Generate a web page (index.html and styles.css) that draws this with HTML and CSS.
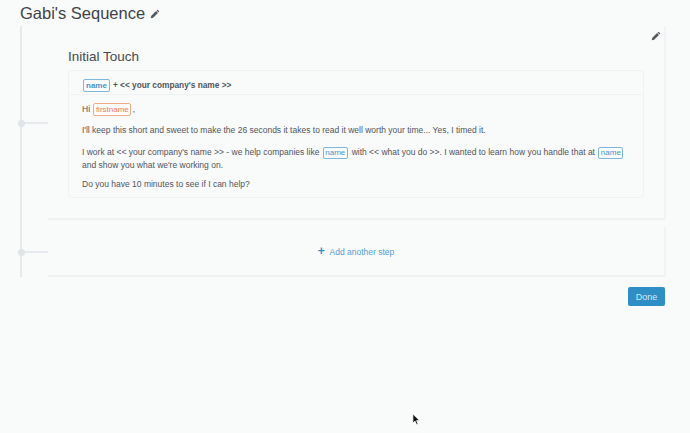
FILE: index.html
```html
<!DOCTYPE html>
<html lang="en">
<head>
    <meta charset="UTF-8">
    <meta name="viewport" content="width=device-width, initial-scale=1.0">
    <title>Gabi's Sequence</title>
    <link rel="stylesheet" href="styles.css">
</head>
<body>

<h1 class="page-title">Gabi's Sequence
    <svg class="pencil pencil-title" viewBox="0 0 12 12"><path d="M9 .8l2.2 2.2-1.1 1.1-2.2-2.2zM7.3 2.5l2.2 2.2-5.7 5.7-3 .8.8-3z"/></svg>
</h1>

<div class="sequence">
    <!-- First step -->
    <section class="step step-first">
        <svg class="pencil pencil-step" viewBox="0 0 12 12"><path d="M9 .8l2.2 2.2-1.1 1.1-2.2-2.2zM7.3 2.5l2.2 2.2-5.7 5.7-3 .8.8-3z"/></svg>
        <h2 class="step-title">Initial Touch</h2>
        <div class="message">
            <div class="message-subject">
                <span class="tag tag-subject">name</span>
                <span>+ &lt;&lt; your company's name &gt;&gt;</span>
            </div>
            <div class="message-body">
                <p class="greeting">Hi <span class="tag tag-orange">firstname</span>,</p>
                <p>I'll keep this short and sweet to make the 26 seconds it takes to read it well worth your time... Yes, I timed it.</p>
                <p class="pitch">I work at &lt;&lt; your company's name &gt;&gt; - we help companies like <span class="tag">name</span> with &lt;&lt; what you do &gt;&gt;. I wanted to learn how you handle that at <span class="tag">name</span> and show you what we're working on.</p>
                <p>Do you have 10 minutes to see if I can help?</p>
            </div>
        </div>
    </section>

    <!-- Add step -->
    <section class="step step-add">
        <a class="add-link" href="#"><span class="add-plus">+</span> Add another step</a>
    </section>
</div>

<div class="actions">
    <button class="btn-done">Done</button>
</div>

<svg class="cursor" viewBox="0 0 10 14"><path d="M1 1v10l2.4-2.2 1.6 3.8 1.7-.7-1.6-3.7h3.2z" fill="#111" stroke="#fff" stroke-width=".8"/></svg>

</body>
</html>
```
FILE: styles.css
```css
* {
    margin: 0;
    padding: 0;
    box-sizing: border-box;
}

body {
    font-family: 'Liberation Sans', Arial, sans-serif;
    background: #f9fafa;
    color: #50555a;
    height: 433px;
    overflow: hidden;
    position: relative;
    padding: 0 24px 0 20px;
}

.pencil {
    fill: #55595e;
}

.page-title {
    font-size: 16.5px;
    font-weight: normal;
    color: #3f4347;
    line-height: 24px;
    height: 26px;
    display: flex;
    align-items: center;
    gap: 5px;
}

.pencil-title {
    width: 10px;
    height: 10px;
    margin-top: 2px;
}

.sequence {
    border-left: 2px solid #e6eaec;
    padding-left: 26px;
    display: flex;
    flex-direction: column;
    gap: 7px;
}

.step {
    position: relative;
    border-right: 2px solid #f1f3f4;
    border-bottom: 2px solid #eff1f2;
    border-bottom-right-radius: 2px;
}

/* connector and dot on the rail */
.step::before {
    content: "";
    position: absolute;
    left: -26px;
    width: 26px;
    height: 2px;
    background: #e6eaec;
}

.step::after {
    content: "";
    position: absolute;
    left: -30px;
    width: 7px;
    height: 7px;
    border-radius: 50%;
    background: #dfe5e8;
}

.step-first {
    height: 194px;
    padding: 22px 20px 0;
}

.step-first::before {
    top: 96px;
}

.step-first::after {
    top: 94px;
}

.step-add {
    height: 50px;
    display: flex;
    align-items: center;
    justify-content: center;
}

.step-add::before {
    top: 24px;
}

.step-add::after {
    top: 22px;
}

.pencil-step {
    position: absolute;
    top: 5px;
    right: 3px;
    width: 10px;
    height: 10px;
}

.step-title {
    font-size: 13.5px;
    font-weight: normal;
    color: #45494d;
    line-height: 18px;
    margin-bottom: 4px;
}

.message {
    border: 1px solid #f0f2f3;
    border-radius: 4px;
    height: 128px;
    font-size: 8.5px;
    line-height: 13px;
}

.message-subject {
    height: 24px;
    padding: 5px 14px 0;
    border-bottom: 1px solid #f0f2f3;
    display: flex;
    align-items: center;
    gap: 3px;
    font-weight: bold;
    font-size: 8.3px;
}

.message-body {
    padding: 6px 13px;
}

.message-body p {
    margin-bottom: 8px;
}

.message-body .greeting {
    margin-top: 2px;
}

.message-body .pitch {
    margin-top: 9px;
    margin-bottom: 6px;
}

.tag {
    display: inline-block;
    color: #4a93c4;
    border: 1px solid #7cb8de;
    border-radius: 2px;
    padding: 0 1.5px;
    line-height: 10px;
    font-size: 8px;
    font-weight: normal;
    margin: 0 1.5px 0 1px;
    background: #fbfcfc;
}

.tag-subject {
    border-width: 1.5px;
    line-height: 11px;
    font-weight: bold;
    margin: 0;
    padding: 0 2px;
}

.tag-orange {
    color: #ee7c54;
    border-color: #f3ab84;
    line-height: 11px;
}

.add-link {
    color: #4f9fd2;
    font-size: 8.5px;
    text-decoration: none;
}

.add-plus {
    font-weight: bold;
    font-size: 12px;
    color: #2f8ec9;
    margin-right: 3px;
}

.actions {
    display: flex;
    justify-content: flex-end;
    margin-top: 10px;
}

.btn-done {
    width: 37px;
    height: 19px;
    margin-right: 1px;
    background: #2e8ec6;
    color: #d7e9f4;
    border: none;
    border-radius: 2px;
    font-family: inherit;
    font-size: 9px;
}

.cursor {
    position: absolute;
    left: 412px;
    top: 413px;
    width: 9px;
    height: 13px;
}
```
